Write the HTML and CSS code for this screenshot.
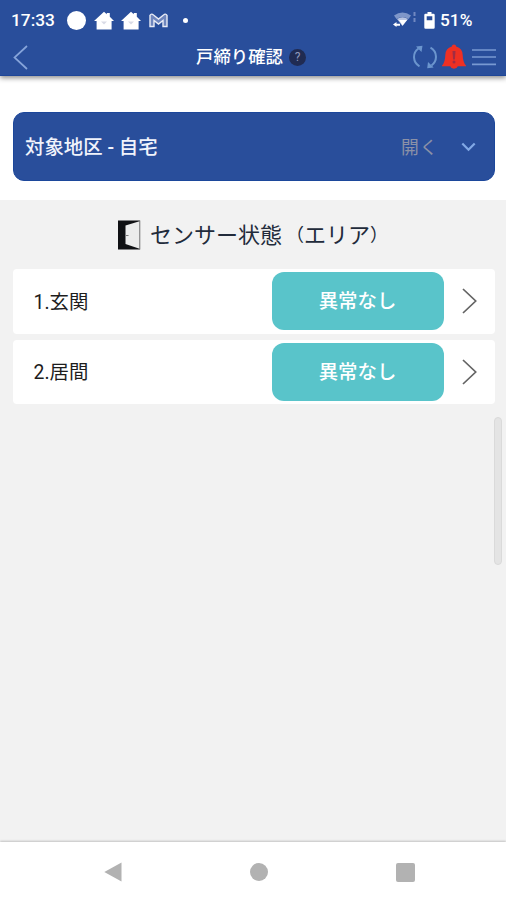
FILE: index.html
```html
<!DOCTYPE html>
<html lang="ja">
<head>
<meta charset="utf-8">
<title>戸締り確認</title>
<link rel="stylesheet" href="styles.css">
</head>
<body>
<header class="top">
  <div class="status">
    <span class="time">17:33</span>
    <span class="disc"></span>
    <svg class="house" viewBox="0 0 20 19"><path d="M10 .8 12.8 3.2V2h3v3.8L20 10h-2.4v8.4H2.6V10H0z" fill="#fff"/><path d="M7 10.5h6l-3 3z" fill="#d9dbe6"/></svg>
    <svg class="house second" viewBox="0 0 20 19"><path d="M10 .8 12.8 3.2V2h3v3.8L20 10h-2.4v8.4H2.6V10H0z" fill="#fff"/><path d="M7 10.5h6l-3 3z" fill="#d9dbe6"/></svg>
    <svg class="mail" viewBox="0 0 19 15"><path d="M1 13.5V2.3Q2.5.2 4.5 2L9.5 6l5-4Q16.500.2 18 2.300V13.500H14V7.500L9.500 11 5 7.500v6z" fill="#6f86bd" stroke="#e8ebf5" stroke-width="1.400"/></svg>
    <span class="dot"></span>
    <svg class="wifi" viewBox="0 0 24 18"><path d="M1 4.500Q9.500-1.500 18 4.500L15.500 8Q9.500 4 3.500 8z" fill="#7e96c9"/><path d="M4 8Q9.500 4.500 15 8L9.500 15z" fill="#b9c5e2"/><path d="M6 9h8l-4.500 5.500z" fill="#fff"/><path d="M0 13.500 3.500 11v1.700H7v2H3.500V16z" fill="#fff"/><path d="M21.500 1v4M21.500 7v4" stroke="#7188c1" stroke-width="2"/></svg>
    <svg class="battery" viewBox="0 0 11 17"><path fill-rule="evenodd" d="M3.500 0h4v1.800H9.500Q10.700 1.800 10.700 3v12.500q0 1.300-1.200 1.300h-8Q.3 16.800.3 15.500V3Q.3 1.800 1.500 1.800h2zM2.700 4.200v4h5.600v-4z" fill="#fff"/></svg>
    <span class="percent">51%</span>
  </div>
  <div class="bar">
    <svg class="back" viewBox="0 0 15 25"><path d="M14 1 1.500 12.500 14 24" fill="none" stroke="#86a4da" stroke-width="1.700"/></svg>
    <h1>戸締り確認</h1>
    <span class="help">?</span>
    <svg class="refresh" viewBox="0 0 24 24"><g fill="none" stroke="#6b95ce" stroke-width="2"><path d="M6.500 21.300A10.500 10.500 0 0 1 5.500 3.500"/><path d="M17.500 2.700A10.500 10.500 0 0 1 18.500 20.500"/></g><path d="M3 1.500 9.500.8 8.500 7zM15 17l-.8 6.200 6.500-.7z" fill="#6b95ce"/></svg>
    <svg class="bell" viewBox="0 0 24 26"><path d="M12 .5q2 0 2.200 2 6.300 1.700 6.500 8.500.2 7.500 3.300 10.500v.8h-8.200a3.900 3.200 0 0 1-7.600 0H0v-.8Q3.100 18.500 3.300 11 3.500 4.200 9.800 2.500 10 .5 12 .5z" fill="#ee3023"/><path d="M10.500 7h3l-.6 8.500h-1.800z" fill="#a12c43"/><circle cx="12" cy="18" r="1.500" fill="#a12c43"/></svg>
    <svg class="menu" viewBox="0 0 24 18"><path d="M0 2h24M0 9h24M0 16.300h24" stroke="#7899d2" stroke-width="1.700"/></svg>
  </div>
</header>
<section class="area">
  <div class="target">
    <span class="name">対象地区 - 自宅</span>
    <span class="open">開く</span>
    <svg class="down" viewBox="0 0 15 10"><path d="m1.300 1.500 6.200 6.300 6.200-6.300" fill="none" stroke="#82a9e6" stroke-width="2.200"/></svg>
  </div>
</section>
<main>
  <h2>
    <svg class="door" viewBox="0 0 23 30"><path d="M0 .5h22v29H0z" fill="#101114"/><path d="M7.500 5.500 21.500 1.300v27.400L7.500 24z" fill="#ececec"/><path d="M22 .5v29" stroke="#aaa"/><path d="M8 15.500h2.500" stroke="#777"/></svg>
    <span class="heading">センサー状態<span class="paren left">（</span>エリア<span class="paren">）</span></span>
  </h2>
  <div class="list">
    <div class="row"><span class="label">1.玄関</span><span class="state">異常なし</span><svg class="next" viewBox="0 0 15 26"><path d="m1 1 12.700 12L1 25" fill="none" stroke="#646464" stroke-width="1.700"/></svg></div>
    <div class="row"><span class="label">2.居間</span><span class="state">異常なし</span><svg class="next" viewBox="0 0 15 26"><path d="m1 1 12.700 12L1 25" fill="none" stroke="#646464" stroke-width="1.700"/></svg></div>
  </div>
  <div class="thumb"></div>
</main>
<nav>
  <svg class="n-back" viewBox="0 0 18 20"><path d="M17.500.5v19L.3 10z" fill="#b2b2b2"/></svg>
  <span class="n-home"></span>
  <span class="n-recent"></span>
</nav>
</body>
</html>
```
FILE: styles.css
```css
* { box-sizing: border-box; }
body {
  margin: 0;
  height: 900px;
  display: flex;
  flex-direction: column;
  overflow: hidden;
  background: #fff;
  font-family: Roboto, "Noto Sans CJK JP", sans-serif;
}
svg { display: block; flex: none; }
h1, h2 { margin: 0; white-space: nowrap; }

.top {
  height: 76px;
  flex: none;
  background: #294e9b;
  border-bottom: 1px solid #1e4698;
  box-shadow: 0 2px 5px rgba(0, 0, 0, .45);
  color: #fff;
}
.status {
  height: 40px;
  padding: 0 34px 0 11px;
  display: flex;
  align-items: center;
  font-size: 17.3px;
  font-weight: 500;
}
.time { width: 56px; }
.disc { width: 19px; height: 19px; border-radius: 50%; background: #fff; }
.house { width: 20px; height: 19px; margin-left: 8px; }
.house.second { margin-left: 7px; }
.mail { width: 19px; height: 15px; margin-left: 8px; }
.dot { width: 5px; height: 5px; margin-left: 15px; border-radius: 50%; background: #fff; }
.wifi { width: 24px; height: 18px; margin-left: auto; }
.battery { width: 11px; height: 17px; margin: 0 5px 0 7px; }
.percent { width: 32px; }

.bar {
  height: 34px;
  padding: 0 10px 0 13px;
  display: flex;
  align-items: center;
}
.back { width: 15px; height: 25px; }
h1 {
  margin-left: 168px;
  width: 87px;
  font-size: 17.4px;
  line-height: 34px;
  font-weight: 500;
}
.help {
  width: 17px;
  height: 17px;
  margin-left: 6px;
  border-radius: 50%;
  background: #202b52;
  color: #8f98ba;
  font-size: 12px;
  line-height: 17px;
  text-align: center;
}
.refresh { width: 24px; height: 24px; margin-left: auto; }
.bell { width: 24px; height: 26px; margin: 0 6px 0 5px; }
.menu { width: 24px; height: 18px; }

.area { height: 124px; flex: none; padding: 36px 11px 0 13px; }
.target {
  height: 69px;
  padding: 0 18px 0 11px;
  display: flex;
  align-items: center;
  border: 1px solid #1c479b;
  border-radius: 11px;
  background: #294e9b;
}
.name { padding-bottom: 2px; color: #f1f3fb; font-size: 19.4px; font-weight: 500; }
.open {
  margin-left: auto;
  width: 38px;
  padding-bottom: 2px;
  color: #8b91a7;
  font-size: 17.8px;
  letter-spacing: 1px;
  white-space: nowrap;
}
.down { width: 15px; height: 10px; margin-left: 22px; }

main {
  position: relative;
  flex: 1;
  padding: 0 11px 0 13px;
  background: #f2f2f2;
}
h2 {
  height: 69px;
  padding-left: 105px;
  display: flex;
  align-items: center;
  gap: 9px;
  color: #222b3b;
  font-size: 22px;
  font-weight: 400;
}
.heading { display: flex; align-items: center; padding-bottom: 4px; }
.paren { width: 22px; font-size: 18px; }
.paren.left { text-align: right; }
.door { width: 23px; height: 30px; }
.list { display: flex; flex-direction: column; gap: 6px; }
.row {
  height: 64.5px;
  padding: 0 18.5px 0 20.5px;
  display: flex;
  align-items: center;
  border-radius: 4px;
  background: #fff;
}
.label { padding-bottom: 2px; color: #1d1d1d; font-size: 19.4px; }
.state {
  width: 172px;
  height: 58px;
  margin-left: auto;
  border-radius: 12px;
  background: #59c4ca;
  color: #fff;
  font-size: 19.4px;
  font-weight: 500;
  line-height: 59px;
  text-align: center;
}
.next { width: 15px; height: 26px; margin-left: 18px; }
.thumb {
  position: absolute;
  right: 4px;
  top: 217px;
  width: 8px;
  height: 148px;
  border: 1px solid #dadada;
  border-radius: 4px;
  background: #e4e4e4;
}

nav {
  position: relative;
  height: 58px;
  flex: none;
  padding: 2px 91px 0 104px;
  display: flex;
  align-items: center;
  justify-content: space-between;
  background: #fff;
  box-shadow: 0 -1px 2px rgba(0, 0, 0, .2);
}
.n-back { width: 18px; height: 20px; }
.n-home { width: 18px; height: 18px; border-radius: 50%; background: #b2b2b2; }
.n-recent { width: 19px; height: 19px; border-radius: 2px; background: #b2b2b2; }
```
